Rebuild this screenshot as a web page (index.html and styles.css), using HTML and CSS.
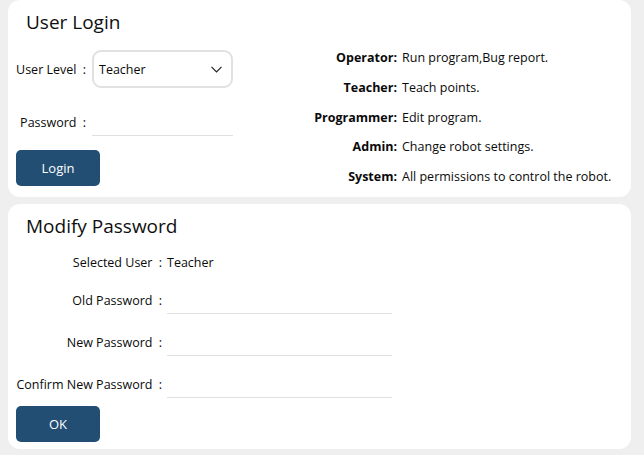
FILE: index.html
```html
<!DOCTYPE html>
<html lang="en">
<head>
    <meta charset="UTF-8">
    <meta name="viewport" content="width=device-width, initial-scale=1.0">
    <title>User Management</title>
    <link rel="stylesheet" href="styles.css">
</head>
<body>

<main class="page">

    <!-- Login card: level select + password on the left, permission notes on the right -->
    <section class="card">
        <h2 class="card-title">User Login</h2>
        <div class="login-body">
            <form class="login-form">
                <div class="field-row">
                    <label class="field-label login-label">User Level&ensp;:</label>
                    <div class="select">
                        <span>Teacher</span>
                        <svg class="chevron" width="11" height="7" viewBox="0 0 11 7">
                            <path d="M0.5 0.8 L5.5 5.8 L10.5 0.8" fill="none" stroke="#222" stroke-width="1.2"/>
                        </svg>
                    </div>
                </div>
                <div class="field-row row-password">
                    <label class="field-label login-label">Password&ensp;:</label>
                    <input type="password" class="line-input login-input">
                </div>
                <button type="button" class="btn btn-login">Login</button>
            </form>

            <dl class="level-list">
                <dt>Operator:</dt><dd>Run program,Bug report.</dd>
                <dt>Teacher:</dt><dd>Teach points.</dd>
                <dt>Programmer:</dt><dd>Edit program.</dd>
                <dt>Admin:</dt><dd>Change robot settings.</dd>
                <dt>System:</dt><dd>All permissions to control the robot.</dd>
            </dl>
        </div>
    </section>

    <!-- Change password for the currently selected user -->
    <section class="card">
        <h2 class="card-title">Modify Password</h2>
        <form class="pw-form">
            <div class="field-row row-user">
                <label class="field-label pw-label">Selected User&ensp;:</label>
                <span class="field-value">Teacher</span>
            </div>
            <div class="field-row row-input">
                <label class="field-label pw-label">Old Password&ensp;:</label>
                <input type="password" class="line-input pw-input">
            </div>
            <div class="field-row row-input">
                <label class="field-label pw-label">New Password&ensp;:</label>
                <input type="password" class="line-input pw-input">
            </div>
            <div class="field-row row-input">
                <label class="field-label pw-label">Confirm New Password&ensp;:</label>
                <input type="password" class="line-input pw-input">
            </div>
            <button type="button" class="btn btn-ok">OK</button>
        </form>
    </section>

</main>

</body>
</html>
```

FILE: styles.css
```css
/* General styling */
body {
    margin: 0;
    padding: 0;
    background-color: rgb(239, 239, 239);
    font-family: 'Open Sans', 'Noto Sans', sans-serif;
    font-size: 12.5px;
    color: rgb(10, 10, 10);
}

.page {
    display: flex;
    flex-direction: column;
    gap: 7px;
    padding: 0 13px 7px 8px;
}

.card {
    background-color: white;
    border-radius: 12px;
    padding: 10px 8px 11px 8px;
}

.card + .card {
    padding-bottom: 7px;
}

.card-title {
    margin: 0 0 0 10px;
    font-size: 19px;
    font-weight: normal;
    line-height: 24px;
    color: rgb(15, 15, 15);
}

/* Form rows */
.field-row {
    display: flex;
    align-items: center;
}

.field-label {
    flex: none;
    text-align: right;
    white-space: nowrap;
}

.line-input {
    box-sizing: border-box;
    height: 28px;
    border: none;
    border-bottom: 1px solid rgb(224, 224, 224);
    outline: none;
    background: transparent;
    font: inherit;
}

.btn {
    display: block;
    width: 84px;
    height: 36px;
    border: none;
    border-radius: 5px;
    background-color: rgb(34, 78, 116);
    color: white;
    font: inherit;
    font-size: 13px;
    cursor: pointer;
}

/* Login card */
.login-body {
    display: flex;
    align-items: flex-start;
    margin-top: 16px;
}

.login-label {
    width: 70px;
    padding-right: 6px;
}

.select {
    box-sizing: border-box;
    display: flex;
    align-items: center;
    justify-content: space-between;
    width: 141px;
    height: 38px;
    padding: 0 9px 0 5px;
    border: 2px solid rgb(225, 225, 225);
    border-radius: 9px;
}

.row-password {
    margin-top: 20px;
}

.login-input {
    width: 141px;
}

.btn-login {
    margin-top: 14px;
}

.level-list {
    display: grid;
    grid-template-columns: 97px auto;
    grid-auto-rows: 16px;
    row-gap: 13.75px;
    align-items: center;
    column-gap: 5px;
    margin: 0 0 0 67px;
    line-height: 16px;
}

.level-list dt {
    font-weight: bold;
    text-align: right;
}

.level-list dd {
    margin: 0;
    white-space: nowrap;
}

/* Modify password card */
.pw-form {
    margin-top: 14px;
}

.pw-label {
    width: 146px;
    padding-right: 1px;
}

.row-user {
    height: 20px;
}

.field-value {
    padding-left: 4px;
}

.row-input {
    margin-top: 14px;
}

.pw-input {
    width: 225px;
    margin-left: 4px;
}

.btn-ok {
    margin-top: 8px;
}
```
